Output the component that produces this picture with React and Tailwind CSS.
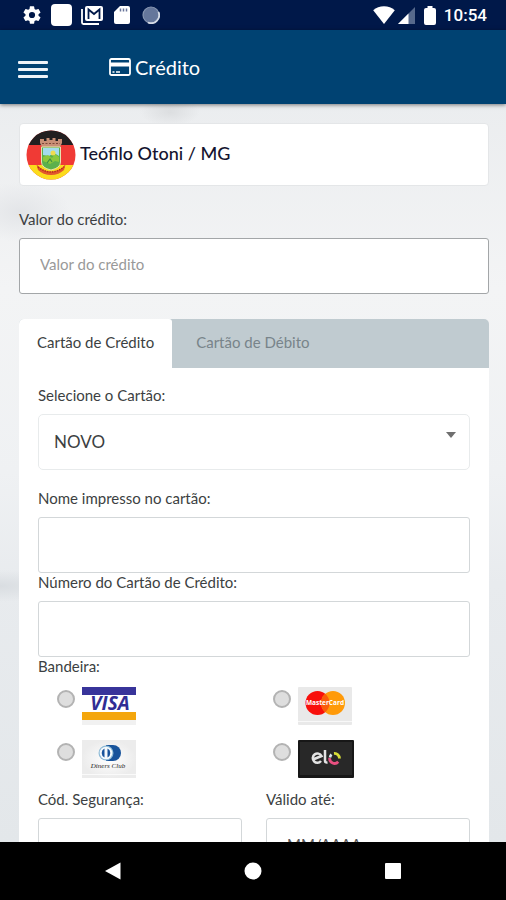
import React from 'react';

const fieldClass =
  'block h-14 w-full rounded-[3px] border border-[#d3d7d9] bg-white px-5 pb-1 text-[15px] text-[#444] outline-none placeholder:text-[#555]';
const labelClass = 'mb-2.5 block text-[15px] leading-[18px] text-[#3c3f42]';

function StatusBar() {
  return (
    <div className="flex h-[30px] shrink-0 items-center justify-between bg-[#001849] pr-[19px] pl-[22px] text-white">
      <div className="flex items-center gap-[9px]">
        <svg width="20" height="20" viewBox="1 1 22 22" fill="#fff" aria-hidden="true">
          <path d="M19.14 12.94c.04-.3.06-.61.06-.94s-.02-.64-.07-.94l2.03-1.58a.49.49 0 0 0 .12-.61l-1.92-3.32a.49.49 0 0 0-.59-.22l-2.39.96c-.5-.38-1.03-.7-1.62-.94l-.36-2.54a.48.48 0 0 0-.48-.41h-3.84c-.24 0-.43.17-.47.41l-.36 2.54c-.59.24-1.13.57-1.62.94l-2.39-.96a.48.48 0 0 0-.59.22L2.74 8.87a.47.47 0 0 0 .12.61l2.03 1.58c-.05.3-.09.63-.09.94s.02.64.07.94l-2.03 1.58a.49.49 0 0 0-.12.61l1.92 3.32c.12.22.37.29.59.22l2.39-.96c.5.38 1.03.7 1.62.94l.36 2.54c.05.24.24.41.48.41h3.84c.24 0 .44-.17.47-.41l.36-2.54c.59-.24 1.13-.56 1.62-.94l2.39.96c.22.08.47 0 .59-.22l1.92-3.32a.47.47 0 0 0-.12-.61zM12 15.400a3.400 3.400 0 1 1 0-6.800 3.400 3.400 0 0 1 0 6.800z" />
        </svg>
        <span className="h-[22px] w-[21px] rounded-[4px] bg-white" />
        <svg width="22" height="20" viewBox="0 0 22 20" fill="none" aria-hidden="true">
          <path d="M1 4v13.500A1.500 1.500 0 0 0 2.500 19H18" stroke="#fff" strokeWidth="1.800" />
          <rect x="4" y="1" width="18" height="15" rx="2" fill="#fff" />
          <path d="M7.500 14V4.500L13 9l5.500-4.500V14" stroke="#001849" strokeWidth="1.800" />
        </svg>
        <svg className="ml-[2px]" width="16" height="20" viewBox="0 0 16 20" aria-hidden="true">
          <path d="M6 1h8a2 2 0 0 1 2 2v14a2 2 0 0 1-2 2H2a2 2 0 0 1-2-2V7z" fill="#fff" />
          <path d="M6.500 3.500v3M9.500 3.500v3M12.500 3.500v3" stroke="#69759a" strokeWidth="1.500" />
        </svg>
        <svg className="ml-[3px]" width="18" height="18" viewBox="0 0 18 18" aria-hidden="true">
          <circle cx="9" cy="9" r="8" fill="#65779b" stroke="#8796b1" strokeWidth="1.200" />
          <path d="M16.500 6A8 8 0 0 1 6 16.500" fill="none" stroke="#d5dce6" strokeWidth="1.800" />
        </svg>
      </div>
      <div className="flex items-center">
        <svg width="22" height="18" viewBox="0 0 22 18" fill="#fff" aria-hidden="true">
          <path d="M11 18 .2 4.200C3 1.600 7 .2 11 .2s8 1.400 10.800 4z" />
        </svg>
        <svg className="ml-[3px]" width="17" height="17" viewBox="0 0 17 17" aria-hidden="true">
          <path d="M17 0v17H0z" fill="#56698c" />
          <path d="M10.500 6.500V17H0z" fill="#fff" />
        </svg>
        <svg className="ml-[9px]" width="12" height="19" viewBox="0 0 12 19" fill="#fff" aria-hidden="true">
          <path d="M3.500 0h5v2H10a2 2 0 0 1 2 2v13a2 2 0 0 1-2 2H2a2 2 0 0 1-2-2V4a2 2 0 0 1 2-2h1.500z" />
        </svg>
        <span className="ml-2 font-[Roboto,sans-serif] text-[17px] leading-5 font-medium">10:54</span>
      </div>
    </div>
  );
}

function Header() {
  return (
    <header className="relative flex h-[74px] shrink-0 items-center bg-[#004272] px-[18px] text-white shadow-[0_1px_4px_rgba(0,0,0,0.5)]">
      <button type="button" aria-label="Menu" className="mt-1 flex w-[30px] flex-col gap-1">
        <span className="h-[3px] rounded-[1px] bg-[#eef3f8]" />
        <span className="h-[3px] rounded-[1px] bg-[#eef3f8]" />
        <span className="h-[3px] rounded-[1px] bg-[#eef3f8]" />
      </button>
      <h1 className="ml-[61px] flex items-center gap-1 text-xl leading-6">
        <svg width="22" height="18" viewBox="0 0 22 18" fill="none" aria-hidden="true">
          <rect x="1" y="1" width="20" height="16" rx="1.500" stroke="#fff" strokeWidth="1.800" />
          <path d="M1 6.500h20" stroke="#fff" strokeWidth="4" />
          <path d="M3.500 14h2M7 14h4" stroke="#fff" strokeWidth="1.500" />
        </svg>
        Crédito
      </h1>
    </header>
  );
}

function Crest() {
  return (
    <svg width="50" height="50" viewBox="0 0 50 50" aria-hidden="true">
      <defs>
        <clipPath id="crest-clip">
          <circle cx="25" cy="25" r="24.500" />
        </clipPath>
      </defs>
      <g clipPath="url(#crest-clip)">
        <rect width="50" height="50" fill="#f03a35" />
        <rect width="50" height="15" fill="#221f20" />
        <rect y="35" width="50" height="15" fill="#fbdc1c" />
        <path d="M14 9h4v2h2.500V8h3v2h3V8h3v3H32V9h4v4l-2 4H16l-2-4z" fill="#c98f76" />
        <path d="M16 13.500h18" stroke="#7d4638" strokeWidth="1" strokeDasharray="2 1.500" />
        <path d="M10 33c3 6 9 8.500 15 8.500S37 39 40 33l-2 7c-3 3-8 5-13 5s-10-2-13-5z" fill="#e2582c" />
        <path d="M12 37q13 10 26 0" fill="none" stroke="#b92d20" strokeWidth="1.600" strokeDasharray="1.500 1" />
        <path d="M15.500 17h19v15q0 6-9.500 8-9.500-2-9.500-8z" fill="#5cb04c" stroke="#e7e3b0" strokeWidth="1" />
        <path d="M17 18h16v8l-5-3-5 3-6-1z" fill="#a4dcee" />
        <path d="M17 27l5-2 4 3 3-4 4 3v5l-4-1-5 3-7-3z" fill="#8cc83c" />
        <circle cx="27" cy="23" r="2.500" fill="#f0dc50" />
        <path d="M21 33l3-4 2 3" fill="none" stroke="#3c8f46" strokeWidth="1.200" />
      </g>
    </svg>
  );
}

function Visa() {
  return (
    <svg width="54" height="38" viewBox="0 0 54 38" role="img" aria-label="Visa">
      <rect y="33" width="54" height="5" fill="#f1f1f1" />
      <rect width="54" height="8" fill="#38349a" />
      <rect y="8" width="54" height="17" fill="#fff" />
      <rect y="25" width="54" height="8" fill="#f4a60c" />
      <text x="28" y="23" textAnchor="middle" fontFamily="Open Sans, sans-serif" fontSize="19" fontWeight="700" fontStyle="italic" fill="#302d94">VISA</text>
    </svg>
  );
}

function MasterCard() {
  return (
    <svg width="54" height="38" viewBox="0 0 54 38" role="img" aria-label="MasterCard">
      <rect width="54" height="38" rx="1" fill="#e9e9e9" />
      <rect y="34" width="54" height="1" fill="#f8f8f8" />
      <circle cx="19.500" cy="16" r="12" fill="#f8100c" />
      <circle cx="35" cy="16" r="12" fill="#ff9a09" />
      <path d="M27.250 6.800a12 12 0 0 1 0 18.400 12 12 0 0 1 0-18.400" fill="#fa5c0b" />
      <text x="27" y="18" textAnchor="middle" fontFamily="Open Sans, sans-serif" fontSize="6.500" fontWeight="700" fill="#fff">MasterCard</text>
    </svg>
  );
}

function Diners() {
  return (
    <svg width="54" height="38" viewBox="0 0 54 38" role="img" aria-label="Diners Club">
      <defs>
        <radialGradient id="diners-bg">
          <stop offset="0" stopColor="#fff" />
          <stop offset="1" stopColor="#ececec" />
        </radialGradient>
      </defs>
      <rect width="54" height="38" fill="url(#diners-bg)" />
      <rect y="34" width="54" height="1" fill="#fafafa" />
      <path d="M24 5h7a8 8 0 0 1 0 16h-7z" fill="#17539b" />
      <circle cx="24" cy="13" r="7.500" fill="#8dbad6" />
      <circle cx="24" cy="13" r="6.300" fill="#f4f9fc" />
      <path d="M22.500 8.500a5 5 0 0 0 0 9zM25.500 8.500a5 5 0 0 1 0 9z" fill="#17539b" />
      <text x="26" y="28" textAnchor="middle" fontFamily="Liberation Serif, serif" fontSize="7" fontStyle="italic" fill="#222">Diners Club</text>
    </svg>
  );
}

function Elo() {
  return (
    <svg width="56" height="38" viewBox="0 0 56 38" role="img" aria-label="Elo">
      <rect width="56" height="38" rx="1" fill="#171717" />
      <rect x="2" y="2" width="52" height="33" fill="#282828" />
      <path d="M15 19.500l8.500-3.500a4.600 4.600 0 1 0-.5 5" fill="none" stroke="#e4e4e4" strokeWidth="2.500" />
      <path d="M27 10v11q0 1.800 2.500 1.500" fill="none" stroke="#e4e4e4" strokeWidth="2.500" />
      <path d="M36 13.500a5 5 0 0 1 5.500 5" fill="none" stroke="#d9df38" strokeWidth="2.800" />
      <path d="M33.500 14.500a5 5 0 0 0-1.500 3" fill="none" stroke="#d8e6ea" strokeWidth="2.600" />
      <path d="M31.700 18a4.900 4.900 0 0 0 8.500 3.800" fill="none" stroke="#e84f80" strokeWidth="2.800" />
    </svg>
  );
}

const brands = [
  { id: 'visa', Logo: Visa },
  { id: 'mastercard', Logo: MasterCard },
  { id: 'diners', Logo: Diners },
  { id: 'elo', Logo: Elo },
];

function BrandPicker() {
  return (
    <fieldset>
      <legend className="block text-[15px] leading-[18px] text-[#3c3f42]">Bandeira:</legend>
      <div className="mt-3 mb-3 grid grid-cols-2 gap-y-[15px]">
        {brands.map(({ id, Logo }) => (
          <label key={id} className="flex items-start gap-[7px] pl-[19px]">
            <input
              type="radio"
              name="bandeira"
              value={id}
              className="mt-[3px] size-[18px] appearance-none rounded-full border-2 border-[#b3b3b3] bg-[#dedede] checked:bg-[#555]"
            />
            <Logo />
          </label>
        ))}
      </div>
    </fieldset>
  );
}

function CardForm() {
  return (
    <form className="bg-white px-[19px] pt-[18px] pb-6">
      <label htmlFor="cartao" className={labelClass}>Selecione o Cartão:</label>
      <div className="relative mb-[19px]">
        <select
          id="cartao"
          className="block h-14 w-full appearance-none rounded-[5px] border border-[#e8ebec] bg-white px-[15px] text-[17px] text-[#3c3f42] outline-none"
        >
          <option>NOVO</option>
        </select>
        <svg className="pointer-events-none absolute top-[18px] right-[14px]" width="10" height="6" viewBox="0 0 10 6" aria-hidden="true">
          <path d="M0 0h10L5 6z" fill="#6f6f6f" />
        </svg>
      </div>

      <label htmlFor="nome" className={labelClass}>Nome impresso no cartão:</label>
      <input id="nome" type="text" className={fieldClass} />

      <label htmlFor="numero" className={labelClass}>Número do Cartão de Crédito:</label>
      <input id="numero" type="text" className={fieldClass} />

      <BrandPicker />

      <div className="grid grid-cols-2 gap-x-6">
        <div>
          <label htmlFor="codigo" className={labelClass}>Cód. Segurança:</label>
          <input id="codigo" type="text" className={fieldClass} />
        </div>
        <div>
          <label htmlFor="validade" className={labelClass}>Válido até:</label>
          <input id="validade" type="text" placeholder="MM/AAAA" className={fieldClass} />
        </div>
      </div>
    </form>
  );
}

function NavBar() {
  return (
    <nav className="relative flex h-[58px] shrink-0 items-center justify-center gap-[122px] bg-black">
      <button type="button" aria-label="Voltar">
        <svg width="18" height="18" viewBox="0 0 18 18" fill="#fff" aria-hidden="true">
          <path d="M1 9 16.500.500v17z" />
        </svg>
      </button>
      <button type="button" aria-label="Início">
        <svg width="18" height="18" viewBox="0 0 18 18" fill="#fff" aria-hidden="true">
          <circle cx="9" cy="9" r="8.500" />
        </svg>
      </button>
      <button type="button" aria-label="Recentes">
        <svg width="18" height="18" viewBox="0 0 18 18" fill="#fff" aria-hidden="true">
          <rect x="1" y="1" width="16" height="16" rx="1" />
        </svg>
      </button>
    </nav>
  );
}

export default function App() {
  return (
    <div className="flex h-screen flex-col overflow-hidden font-[Lato,sans-serif]">
      <StatusBar />
      <Header />
      <main className="min-h-0 flex-1 overflow-hidden bg-[#eff1f3] bg-[radial-gradient(30px_14px_at_170px_8px,#dcdee0,transparent),radial-gradient(50px_30px_at_20px_108px,#e3e5e8,transparent),radial-gradient(60px_16px_at_0px_482px,#d9dde1,transparent),linear-gradient(180deg,#ebedef_0%,#f3f4f5_25%,#eff1f3_50%,#e8ebee_65%,#e3e7ea_100%)] pt-[19px] pr-[17px] pl-[19px]">
        <div className="flex h-[63px] items-center gap-1 rounded-[4px] border border-[#e4e6e8] bg-white pl-[6px]">
          <Crest />
          <strong className="pb-1 text-lg leading-6 font-medium text-[#14142f]">Teófilo Otoni / MG</strong>
        </div>

        <label htmlFor="valor" className="mt-6 mb-2.5 block text-[15px] leading-[18px] text-[#3c3f42]">Valor do crédito:</label>
        <input
          id="valor"
          type="text"
          placeholder="Valor do crédito"
          className="block h-14 w-full rounded-[3px] border border-[#a3a6a8] bg-white px-5 pb-1 text-[15px] text-[#444] outline-none placeholder:text-[#999]"
        />

        <section className="mt-[25px]">
          <div role="tablist" className="flex h-[49px] overflow-hidden rounded-t-[5px] bg-[#c0cbd0] text-[15px] leading-[18px]">
            <button type="button" role="tab" aria-selected="true" className="rounded-tr-[3px] bg-white px-[18px] pb-1 text-[#3c3f42]">
              Cartão de Crédito
            </button>
            <button type="button" role="tab" aria-selected="false" className="px-6 pb-1 text-[#78848a]">
              Cartão de Débito
            </button>
          </div>
          <CardForm />
        </section>
      </main>
      <NavBar />
    </div>
  );
}
